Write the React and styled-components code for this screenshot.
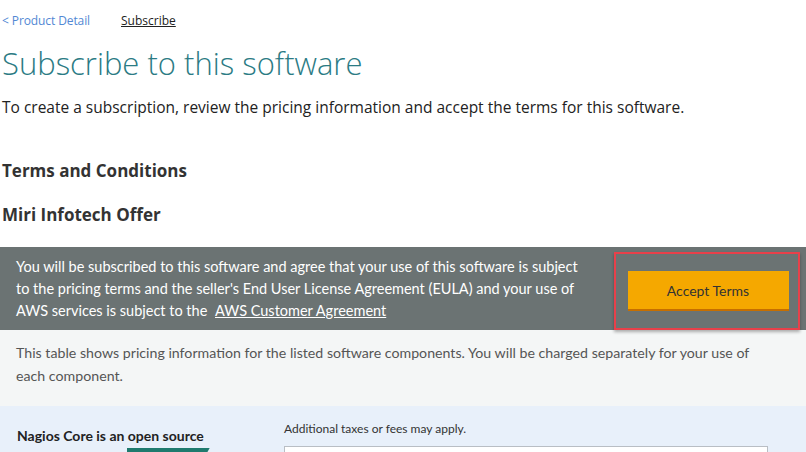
import React from 'react';
import styled, { createGlobalStyle } from 'styled-components';

const Global = createGlobalStyle`
  body {
    margin: 0;
    background: #ffffff;
    font-family: 'Open Sans', 'Liberation Sans', sans-serif;
    color: #333;
  }
`;

const Page = styled.div`
  width: 806px;
  overflow: hidden;
`;

const Top = styled.div`
  padding: 0 2px;
`;

const Crumbs = styled.div`
  display: flex;
  gap: 31px;
  padding-top: 13px;
  font-size: 12px;
  line-height: 16px;
  font-family: 'Open Sans', sans-serif;

  a {
    color: #5288d4;
    text-decoration: none;
    letter-spacing: -0.1px;
  }

  span {
    color: #222;
    text-decoration: underline;
  }
`;

const Title = styled.h1`
  margin: 14px 0 0;
  font-size: 31px;
  line-height: 40px;
  font-weight: 300;
  color: #2b7b84;
`;

const Lead = styled.p`
  margin: 14px 0 0;
  font-size: 15.5px;
  line-height: 20px;
  color: #222;
`;

const Heading = styled.h3`
  margin: ${p => p.top}px 0 0;
  font-size: 17px;
  line-height: 22px;
  font-weight: 700;
  color: #333;
`;

const Panel = styled.div`
  margin-top: 21px;
  height: 83px;
  background: #6b7373;
  display: flex;
  align-items: center;
  justify-content: space-between;
  padding: 0 6px 0 16px;
  box-sizing: border-box;
`;

const PanelText = styled.p`
  margin: 0;
  font-family: Lato, sans-serif;
  font-size: 14.5px;
  line-height: 22px;
  color: #fff;

  a {
    color: #fff;
    text-decoration: underline;
    margin-left: 4px;
  }
`;

const Highlight = styled.div`
  align-self: flex-end;
  width: 186px;
  height: 78px;
  border: 2px solid #e8404a;
  box-sizing: border-box;
  display: flex;
  align-items: center;
  justify-content: center;
  box-shadow: 0 2px 3px rgba(0, 0, 0, 0.3);
`;

const AcceptButton = styled.button`
  width: 161px;
  height: 40px;
  margin-left: 2px;
  background: #f5a800;
  border: none;
  border-bottom: 2px solid #c66f00;
  font-family: Lato, sans-serif;
  font-size: 14px;
  color: #333;
  cursor: pointer;
`;

const Note = styled.div`
  background: #f4f6f6;
  height: 76px;
  padding: 11px 16px 0;
  box-sizing: border-box;
  font-family: Lato, sans-serif;
  font-size: 14.2px;
  line-height: 23px;
  color: #555;
`;

const Pricing = styled.div`
  background: #e8f0fa;
  height: 60px;
  display: grid;
  grid-template-columns: 267px 1fr;
  padding: 0 16px 0 17px;
`;

const Product = styled.div`
  padding-top: 21px;
  font-family: Lato, sans-serif;
  font-weight: 700;
  font-size: 14px;
  line-height: 18px;
  color: #222;
`;

const Tag = styled.span`
  display: inline-block;
  margin-left: 110px;
  margin-top: 3px;
  padding: 0 16px 0 10px;
  height: 18px;
  background: #1f7a6e;
  color: #fff;
  clip-path: polygon(0 0, 100% 0, 88% 100%, 0 100%);
`;

const Fees = styled.div`
  padding-top: 15px;
  font-family: Lato, sans-serif;
  font-size: 12px;
  line-height: 16px;
  color: #333;
`;

const Box = styled.div`
  margin-top: 9px;
  width: 482px;
  height: 30px;
  background: #fff;
  border: 1px solid #b9bec4;
`;

export default function App() {
  return (
    <Page>
      <Global />
      <Top>
        <Crumbs>
          <a href="#">&lt; Product Detail</a>
          <span>Subscribe</span>
        </Crumbs>
        <Title>Subscribe to this software</Title>
        <Lead>To create a subscription, review the pricing information and accept the terms for this software.</Lead>
        <Heading top={43}>Terms and Conditions</Heading>
        <Heading top={22}>Miri Infotech Offer</Heading>
      </Top>
      <Panel>
        <PanelText>
          You will be subscribed to this software and agree that your use of this software is subject<br />
          to the pricing terms and the seller's End User License Agreement (EULA) and your use of<br />
          AWS services is subject to the <a href="#">AWS Customer Agreement</a>
        </PanelText>
        <Highlight>
          <AcceptButton>Accept Terms</AcceptButton>
        </Highlight>
      </Panel>
      <Note>
        This table shows pricing information for the listed software components. You will be charged separately for your use of<br />
        each component.
      </Note>
      <Pricing>
        <Product>
          Nagios Core is an open source
          <Tag>Free Trial</Tag>
        </Product>
        <div>
          <Fees>Additional taxes or fees may apply.</Fees>
          <Box />
        </div>
      </Pricing>
    </Page>
  );
}
